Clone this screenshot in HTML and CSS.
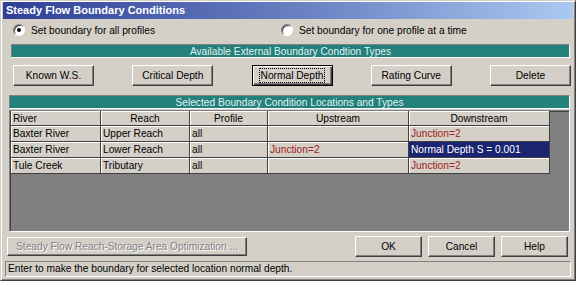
FILE: index.html
```html
<!DOCTYPE html>
<html lang="en">
<head>
  <meta charset="UTF-8" />
  <title>Steady Flow Boundary Conditions</title>
  <link rel="stylesheet" href="styles.css">
</head>
<body>

  <div class="dialog">
    <div class="titlebar">Steady Flow Boundary Conditions</div>

    <div class="content">
      <div class="radio-row">
        <label class="radio"><span class="dot checked"></span>Set boundary for all profiles</label>
        <label class="radio"><span class="dot"></span>Set boundary for one profile at a time</label>
      </div>

      <div class="band band-top">Available External Boundary Condtion Types</div>

      <div class="type-buttons">
        <button class="btn">Known W.S.</button>
        <button class="btn">Critical Depth</button>
        <button class="btn default"><span class="focus">Normal Depth</span></button>
        <button class="btn">Rating Curve</button>
        <button class="btn">Delete</button>
      </div>

      <div class="band">Selected Boundary Condition Locations and Types</div>

      <div class="grid-area">
        <table class="grid">
          <thead>
            <tr>
              <th class="col-river left">River</th>
              <th class="col-reach">Reach</th>
              <th class="col-profile">Profile</th>
              <th class="col-wide">Upstream</th>
              <th class="col-wide">Downstream</th>
            </tr>
          </thead>
          <tbody>
            <tr>
              <td>Baxter River</td>
              <td>Upper Reach</td>
              <td>all</td>
              <td></td>
              <td class="junction">Junction=2</td>
            </tr>
            <tr>
              <td>Baxter River</td>
              <td>Lower Reach</td>
              <td>all</td>
              <td class="junction">Junction=2</td>
              <td class="selected">Normal Depth S = 0.001</td>
            </tr>
            <tr>
              <td>Tule Creek</td>
              <td>Tributary</td>
              <td>all</td>
              <td></td>
              <td class="junction">Junction=2</td>
            </tr>
          </tbody>
        </table>
      </div>

      <div class="bottom-row">
        <button class="btn optimize" disabled>Steady Flow Reach-Storage Area Optimization ...</button>
        <div class="actions">
          <button class="btn small">OK</button>
          <button class="btn small">Cancel</button>
          <button class="btn small">Help</button>
        </div>
      </div>

      <div class="status">Enter to make the boundary for selected location normal depth.</div>
    </div>
  </div>

</body>
</html>
```

FILE: styles.css
```css
body {
  margin: 0;
  background: #ffffff;
  font-family: "Liberation Sans", Arial, sans-serif;
  font-size: 10.2px;
  color: #000;
}

.dialog {
  width: 576px;
  height: 281px;
  box-sizing: border-box;
  padding: 2px;
  background: #d4d0c8;
  border: 1px solid;
  border-color: #d4d0c8 #404040 #404040 #d4d0c8;
  box-shadow: inset 1px 1px #ffffff, inset -1px -1px #808080;
}

.titlebar {
  height: 17px;
  line-height: 17px;
  padding-left: 3px;
  margin-top: -1px;
  color: #ffffff;
  font-weight: bold;
  font-size: 11px;
  background: linear-gradient(90deg, #2f3f95, #6c84c4 55%, #a9c9f1);
}

.content {
  padding: 0 3px 0 6px;
}

/* radio buttons */
.radio-row {
  display: flex;
  height: 22px;
  align-items: center;
}

.radio {
  display: flex;
  align-items: center;
  gap: 6px;
}

.radio:first-child {
  margin-left: 4px;
  width: 268px;
}

.dot {
  width: 12px;
  height: 12px;
  box-sizing: border-box;
  border-radius: 50%;
  background: #ffffff;
  border: 1px solid;
  border-color: #808080 #ffffff #ffffff #808080;
  box-shadow: inset 1px 1px #404040;
  position: relative;
}

.dot.checked::after {
  content: "";
  position: absolute;
  left: 3px;
  top: 3px;
  width: 4px;
  height: 4px;
  border-radius: 50%;
  background: #000;
}

/* teal section bars */
.band {
  height: 14px;
  line-height: 13px;
  box-sizing: border-box;
  margin-top: 9px;
  text-align: center;
  color: #e2f2f0;
  background: #23807b;
  border: 1px solid;
  border-color: #808080 #ffffff #ffffff #808080;
}

.band-top {
  margin-top: 3px;
  margin-left: 2px;
}

/* buttons */
.btn {
  font-family: inherit;
  font-size: 10.2px;
  color: #000;
  background: #d4d0c8;
  border: 1px solid;
  border-color: #ffffff #404040 #404040 #ffffff;
  box-shadow: inset -1px -1px #808080;
  padding: 0;
  height: 21px;
}

.btn.default {
  border-color: #000;
  box-shadow: inset 1px 1px #ffffff, inset -1px -1px #404040, inset -2px -2px #808080;
}

.focus {
  border: 1px dotted #000;
  padding: 1px 1px;
}

.type-buttons {
  display: flex;
  justify-content: space-between;
  margin: 7px -1px 0 4px;
}

.type-buttons .btn {
  width: 81px;
}

/* grid */
.grid-area {
  height: 122px;
  margin-top: 1px;
  box-sizing: border-box;
  background: #808080;
  border: 1px solid;
  border-color: #808080 #ffffff #ffffff #808080;
  box-shadow: inset 1px 1px #404040;
  padding: 0 0 0 1px;
}

.grid {
  border-collapse: collapse;
  table-layout: fixed;
}

.grid th,
.grid td {
  height: 15px;
  padding: 0 2px;
  font-weight: normal;
  white-space: nowrap;
  overflow: hidden;
  background: #d4d0c8;
  border-right: 1px solid #404040;
  border-bottom: 1px solid #404040;
  box-shadow: inset 1px 1px #ffffff;
  text-align: left;
}

.grid th {
  height: 14px;
  text-align: center;
}

.grid th.left {
  text-align: left;
}

.col-river { width: 85px; }
.col-reach { width: 84px; }
.col-profile { width: 73px; }
.col-wide { width: 136px; }

.grid td.junction {
  color: #a01c1c;
}

.grid td.selected {
  background: #1a2470;
  color: #ffffff;
  box-shadow: none;
}

/* bottom */
.bottom-row {
  display: flex;
  justify-content: space-between;
  align-items: center;
  margin: 4px 2px 0 -2px;
}

.btn.optimize {
  width: 240px;
  height: 19px;
  color: #808080;
  text-shadow: 1px 1px #ffffff;
}

.actions {
  display: flex;
  gap: 6px;
}

.btn.small {
  width: 67px;
}

.status {
  height: 16px;
  line-height: 14px;
  box-sizing: border-box;
  margin: 4px -1px 0 -4px;
  padding-left: 2px;
  border: 1px solid;
  border-color: #808080 #ffffff #ffffff #808080;
}
```
